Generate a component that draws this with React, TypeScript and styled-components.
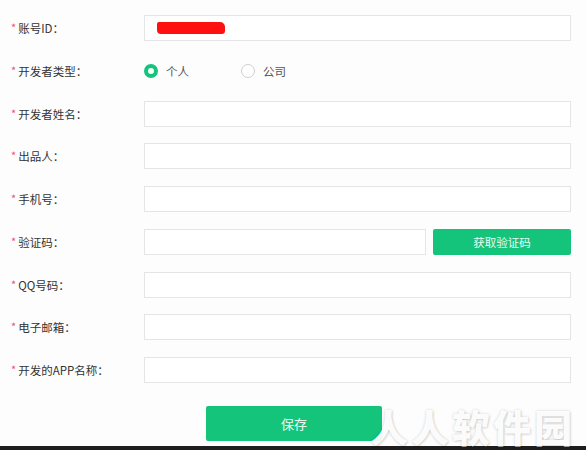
import React from "react";
import styled, { createGlobalStyle } from "styled-components";

const GlobalStyle = createGlobalStyle`
  html, body {
    margin: 0;
    padding: 0;
    background: #fdfdfd;
    font-family: "Noto Sans CJK SC", "Noto Sans", sans-serif;
  }
`;

const fields = [
  { label: "账号ID：", kind: "account" },
  { label: "开发者类型：", kind: "radio" },
  { label: "开发者姓名：", kind: "input" },
  { label: "出品人：", kind: "input" },
  { label: "手机号：", kind: "input" },
  { label: "验证码：", kind: "code" },
  { label: "QQ号码：", kind: "input" },
  { label: "电子邮箱：", kind: "input" },
  { label: "开发的APP名称：", kind: "input" },
];

const App = () => {
  return (
    <>
      <GlobalStyle />
      <Page>
        <Form>
          {fields.map((f) => (
            <Row key={f.label}>
              <Label>
                <Star>*</Star>
                {f.label}
              </Label>
              {f.kind === "radio" && (
                <RadioGroup>
                  <RadioItem>
                    <Radio $checked />
                    个人
                  </RadioItem>
                  <RadioItem>
                    <Radio />
                    公司
                  </RadioItem>
                </RadioGroup>
              )}
              {f.kind === "input" && <Input />}
              {f.kind === "account" && (
                <Input>
                  <Scribble />
                </Input>
              )}
              {f.kind === "code" && (
                <CodeWrap>
                  <Input />
                  <CodeButton>获取验证码</CodeButton>
                </CodeWrap>
              )}
            </Row>
          ))}
        </Form>
        <Footer>
          <SaveButton>保存</SaveButton>
          <Watermark>人人软件园</Watermark>
        </Footer>
        <BottomBar />
      </Page>
    </>
  );
};

const Page = styled.div`
  width: 586px;
  height: 450px;
  display: flex;
  flex-direction: column;
  background: #fdfdfd;
`;

const Form = styled.div`
  padding-top: 15px;
  display: flex;
  flex-direction: column;
  gap: 16.75px;
`;

const Row = styled.div`
  display: flex;
  align-items: center;
  height: 26px;
`;

const Label = styled.div`
  width: 133px;
  padding-left: 11px;
  font-size: 11.5px;
  color: #333;
  display: flex;
  align-items: center;
  white-space: nowrap;
`;

const Star = styled.span`
  color: #f0506e;
  font-size: 11px;
  margin-right: 2px;
  position: relative;
  top: -1px;
`;

const Input = styled.div`
  box-sizing: border-box;
  flex: 1;
  height: 26px;
  margin-right: 15px;
  border: 1px solid #e5e5e5;
  background: #fff;
  display: flex;
  align-items: center;
`;

const Scribble = styled.div`
  width: 68px;
  height: 12px;
  margin-left: 12px;
  background: #ff1010;
  border-radius: 2px 5px 3px 4px;
`;

const CodeWrap = styled.div`
  flex: 1;
  display: flex;
  gap: 7px;
  margin-right: 15px;
  ${Input} {
    margin-right: 0;
  }
`;

const CodeButton = styled.div`
  width: 138px;
  height: 26px;
  background: #14c47b;
  color: #e9fbf1;
  font-size: 11.5px;
  display: flex;
  align-items: center;
  justify-content: center;
  border-radius: 2px;
`;

const RadioGroup = styled.div`
  display: flex;
  align-items: center;
  gap: 52px;
`;

const RadioItem = styled.label`
  display: flex;
  align-items: center;
  gap: 8px;
  font-size: 11.5px;
  color: #555;
`;

const Radio = styled.span<{ $checked?: boolean }>`
  box-sizing: border-box;
  width: 14px;
  height: 14px;
  border-radius: 50%;
  border: ${(p) => (p.$checked ? "4px solid #14c47b" : "1px solid #cfcfcf")};
  background: #fff;
`;

const Footer = styled.div`
  position: relative;
  margin-top: 23px;
  height: 40px;
  display: flex;
  align-items: flex-start;
  padding-left: 206px;
`;

const SaveButton = styled.div`
  width: 176px;
  height: 35px;
  background: #14c47b;
  color: #e9fbf1;
  font-size: 13px;
  display: flex;
  align-items: center;
  justify-content: center;
  border-radius: 2px;
`;

const Watermark = styled.div`
  position: absolute;
  left: 370px;
  top: 0;
  font-size: 38px;
  font-weight: 900;
  letter-spacing: 3px;
  color: rgba(255, 255, 255, 0.95);
  text-shadow: 0 0 3px rgba(0, 0, 0, 0.16), 1px 1px 2px rgba(0, 0, 0, 0.1);
  white-space: nowrap;
  line-height: 40px;
`;

const BottomBar = styled.div`
  flex: 1;
  background: #1e1e1e;
`;

export default App;
